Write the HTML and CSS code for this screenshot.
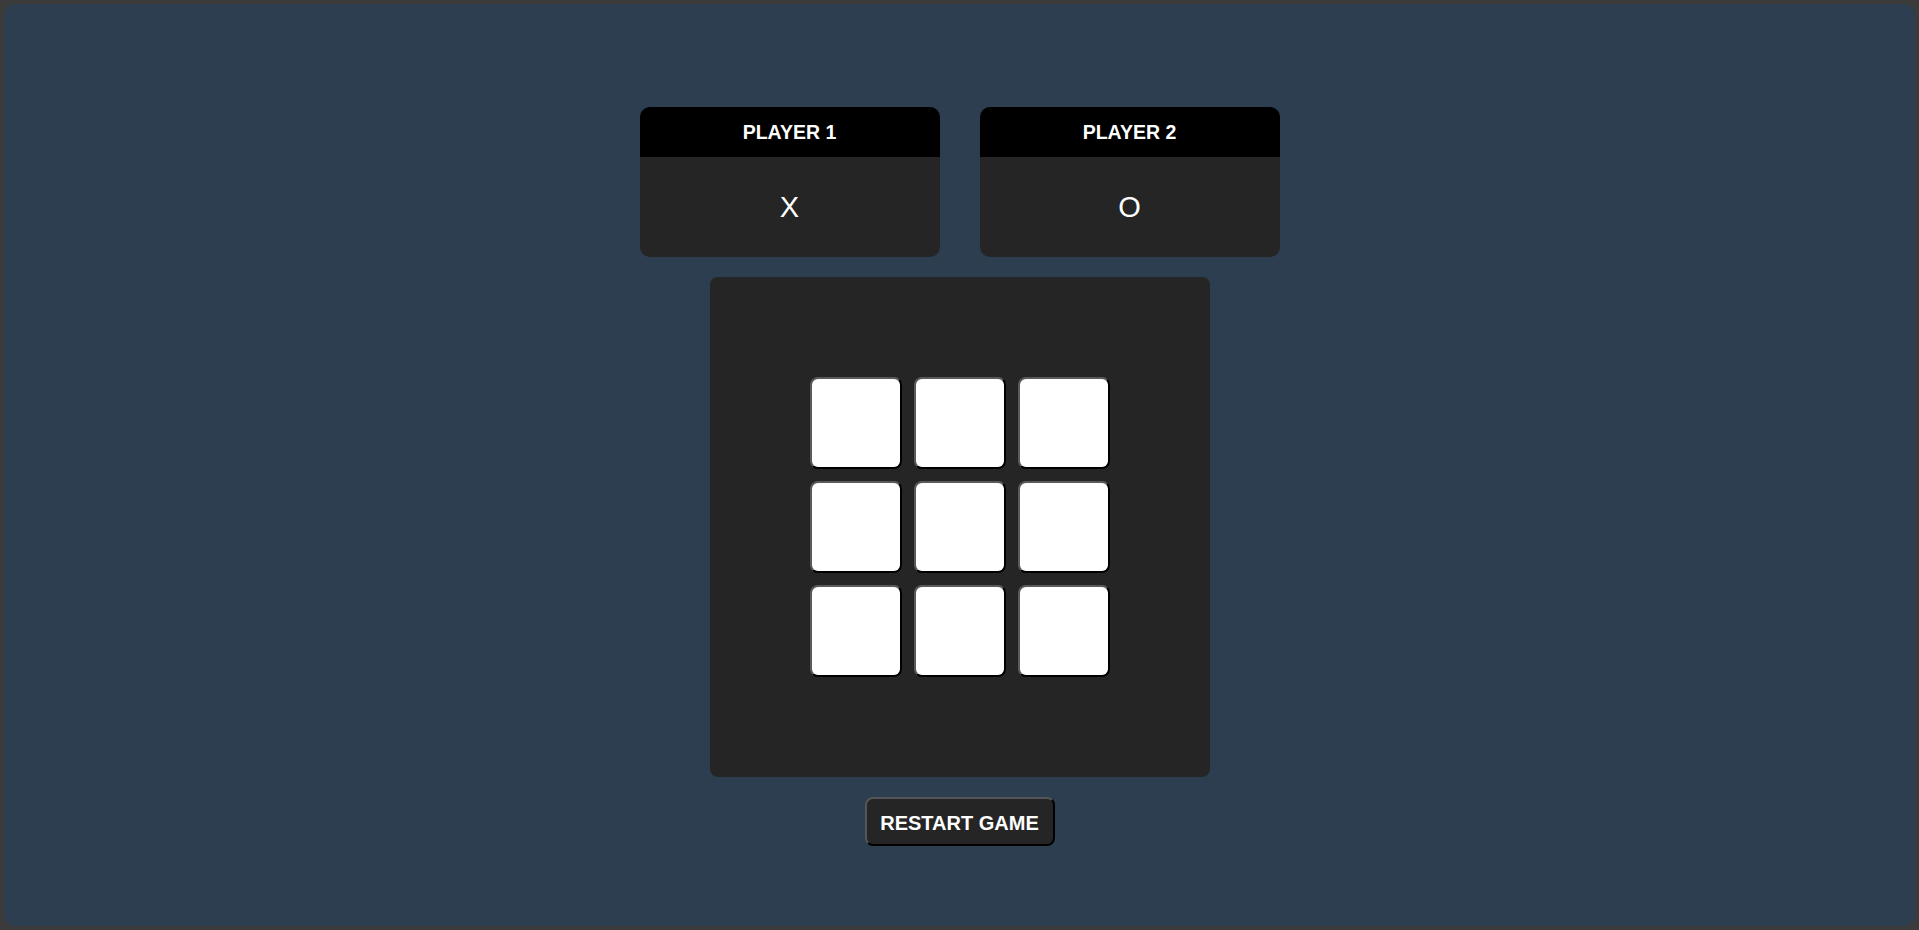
FILE: index.html
```html
<!DOCTYPE html>
<html lang="en">
<head>
<meta charset="utf-8">
<title>Tic Tac Toe</title>
<link rel="stylesheet" href="styles.css">
</head>
<body>
<div class="app">
  <div class="players">
    <div class="player">
      <div class="player-head">PLAYER 1</div>
      <div class="player-mark">X</div>
    </div>
    <div class="player">
      <div class="player-head">PLAYER 2</div>
      <div class="player-mark">O</div>
    </div>
  </div>
  <div class="board">
    <div class="grid">
      <button class="cell"></button>
      <button class="cell"></button>
      <button class="cell"></button>
      <button class="cell"></button>
      <button class="cell"></button>
      <button class="cell"></button>
      <button class="cell"></button>
      <button class="cell"></button>
      <button class="cell"></button>
    </div>
  </div>
  <button class="restart">RESTART GAME</button>
</div>
</body>
</html>
```

FILE: styles.css
```css
* { box-sizing: border-box; }
html, body {
  margin: 0;
  height: 100%;
}
body {
  background: #3b3b3b;
  padding: 4px;
  font-family: "Liberation Sans", Arial, sans-serif;
}
.app {
  height: 100%;
  background: #2c3e50;
  border-radius: 12px;
  display: flex;
  flex-direction: column;
  align-items: center;
  padding-top: 103px;
}
.players {
  display: flex;
  gap: 40px;
}
.player {
  width: 300px;
  height: 150px;
  border-radius: 10px;
  overflow: hidden;
  background: #252525;
  display: flex;
  flex-direction: column;
  color: #fff;
}
.player-head {
  height: 50px;
  background: #000;
  display: flex;
  align-items: center;
  justify-content: center;
  font-weight: bold;
  font-size: 19.5px;
}
.player-mark {
  flex: 1;
  display: flex;
  align-items: center;
  justify-content: center;
  font-size: 29px;
}
.board {
  margin-top: 20px;
  width: 500px;
  height: 500px;
  background: #252525;
  border-radius: 8px;
  display: flex;
  align-items: center;
  justify-content: center;
}
.grid {
  display: grid;
  grid-template-columns: repeat(3, 92px);
  grid-template-rows: repeat(3, 92px);
  gap: 12px 12px;
}
.cell {
  width: 92px;
  height: 92px;
  background: #fff;
  border: 2px solid;
  border-color: #5a5a5a #000 #000 #5a5a5a;
  border-radius: 8px;
  padding: 0;
}
.restart {
  margin-top: 20px;
  width: 190px;
  height: 49px;
  background: #252525;
  color: #fff;
  font-family: "Liberation Sans", Arial, sans-serif;
  font-weight: bold;
  font-size: 20px;
  border: 2px solid;
  border-color: #555 #000 #000 #555;
  border-radius: 8px;
  padding: 3px 0 0;
}
```
